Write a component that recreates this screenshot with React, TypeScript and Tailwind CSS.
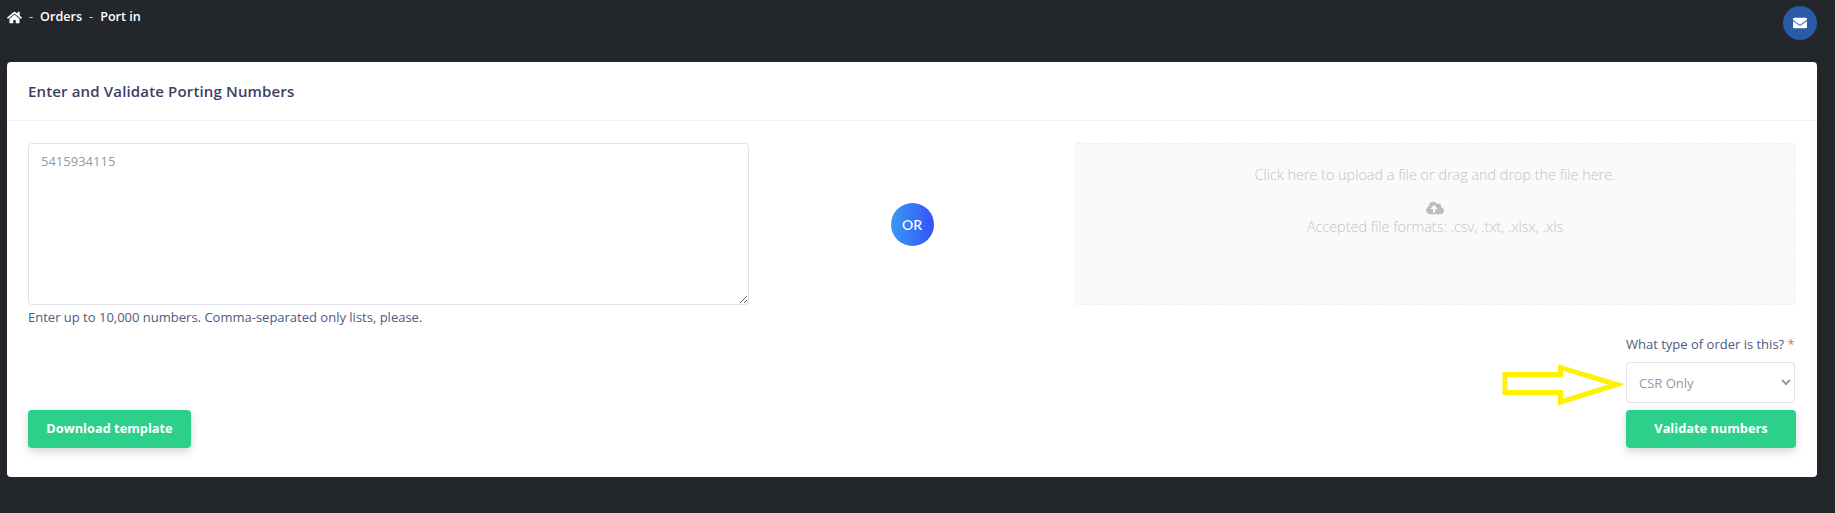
import { FaCloudUploadAlt, FaEnvelope, FaHome } from 'react-icons/fa'

function Breadcrumbs() {
  return (
    <div className="flex items-center text-[12.6px] leading-[18px] font-semibold text-white">
      <FaHome className="text-[15px]" />
      <span className="mx-[7px] font-normal text-gray-300">-</span>
      <span>Orders</span>
      <span className="mx-[7px] font-normal text-gray-300">-</span>
      <span>Port in</span>
    </div>
  )
}

function GreenButton({ label, className }: { label: string; className: string }) {
  return (
    <button className={`h-[38px] rounded-[4px] bg-[#2dd08a] text-[12.8px] font-bold text-white shadow-[0_4px_8px_rgba(50,60,90,0.2)] ${className}`}>
      {label}
    </button>
  )
}

function ArrowMark() {
  return (
    <svg className="absolute left-[-125px] top-[29px]" width="122" height="42" viewBox="0 0 122 42" fill="none">
      <path d="M4 10.5H59.5V3.5L116 20.5L59.5 38V28.5H4Z" stroke="#fff200" strokeWidth="5" />
    </svg>
  )
}

export default function App() {
  return (
    <div className="h-[513px] bg-[#23272c] font-['Open_Sans',sans-serif]">
      <div className="flex h-[62px] items-start justify-between pl-[7px] pr-[18px] pt-[8px]">
        <Breadcrumbs />
        <div className="-mt-[2px] flex h-[34px] w-[34px] items-center justify-center rounded-full bg-[#2b5aa6] text-[14px] text-white">
          <FaEnvelope />
        </div>
      </div>

      <div className="mx-[7px] h-[415px] w-[1810px] rounded-[4px] bg-white">
        <div className="flex h-[59px] items-center border-b border-[#eff0f4] px-[21px]">
          <h2 className="text-[15px] font-semibold tracking-[0.15px] text-[#3f3d64]">Enter and Validate Porting Numbers</h2>
        </div>

        <div className="px-[21px] pt-[22px]">
          <div className="flex items-start">
            <div className="w-[721px]">
              <textarea
                defaultValue="5415934115"
                className="block h-[162px] w-full rounded-[4px] border border-[#e0e1e8] px-[12px] py-[7px] text-[13px] leading-[20px] text-[#8d9ab0] outline-none"
              />
              <p className="mt-[2px] text-[13px] leading-[20px] text-[#4e5a7c]">
                Enter up to 10,000 numbers. Comma-separated only lists, please.
              </p>
            </div>

            <div className="flex h-[162px] flex-1 items-center justify-center">
              <div className="flex h-[43px] w-[43px] items-center justify-center rounded-full bg-gradient-to-r from-[#3b97f5] to-[#3650f8] font-['Lato',sans-serif] text-[14px] font-medium text-white">
                OR
              </div>
            </div>

            <div className="mr-[1px] flex h-[162px] w-[720px] flex-col items-center rounded-[2px] border border-dashed border-[#f0f0f2] bg-[#fafafa] pt-[21px] text-[14.4px] font-light leading-[20px] text-[#c4c4c4]">
              <p>Click here to upload a file or drag and drop the file here.</p>
              <FaCloudUploadAlt className="mt-[14px] text-[18px] text-[#bdbdbd]" />
              <p className="mt-[0px]">Accepted file formats: .csv, .txt, .xlsx, .xls</p>
            </div>
          </div>

          <div className="mt-[8px] flex items-end justify-between">
            <GreenButton label="Download template" className="w-[163px]" />
            <div className="relative w-[170px]">
              <ArrowMark />
              <label className="block whitespace-nowrap text-[13px] font-medium leading-[18px] text-[#4e5a7c]">
                What type of order is this? <span className="text-[#f4643c]">*</span>
              </label>
              <select
                defaultValue="CSR Only"
                className="mt-[9px] block h-[41px] w-[169px] rounded-[4px] border border-[#e0e1e8] bg-white pl-[8px] pr-[2px] text-[13px] text-[#8d9ab0] outline-none"
              >
                <option>CSR Only</option>
                <option>Full Port</option>
              </select>
              <GreenButton label="Validate numbers" className="mt-[7px] w-full" />
            </div>
          </div>
        </div>
      </div>
    </div>
  )
}
